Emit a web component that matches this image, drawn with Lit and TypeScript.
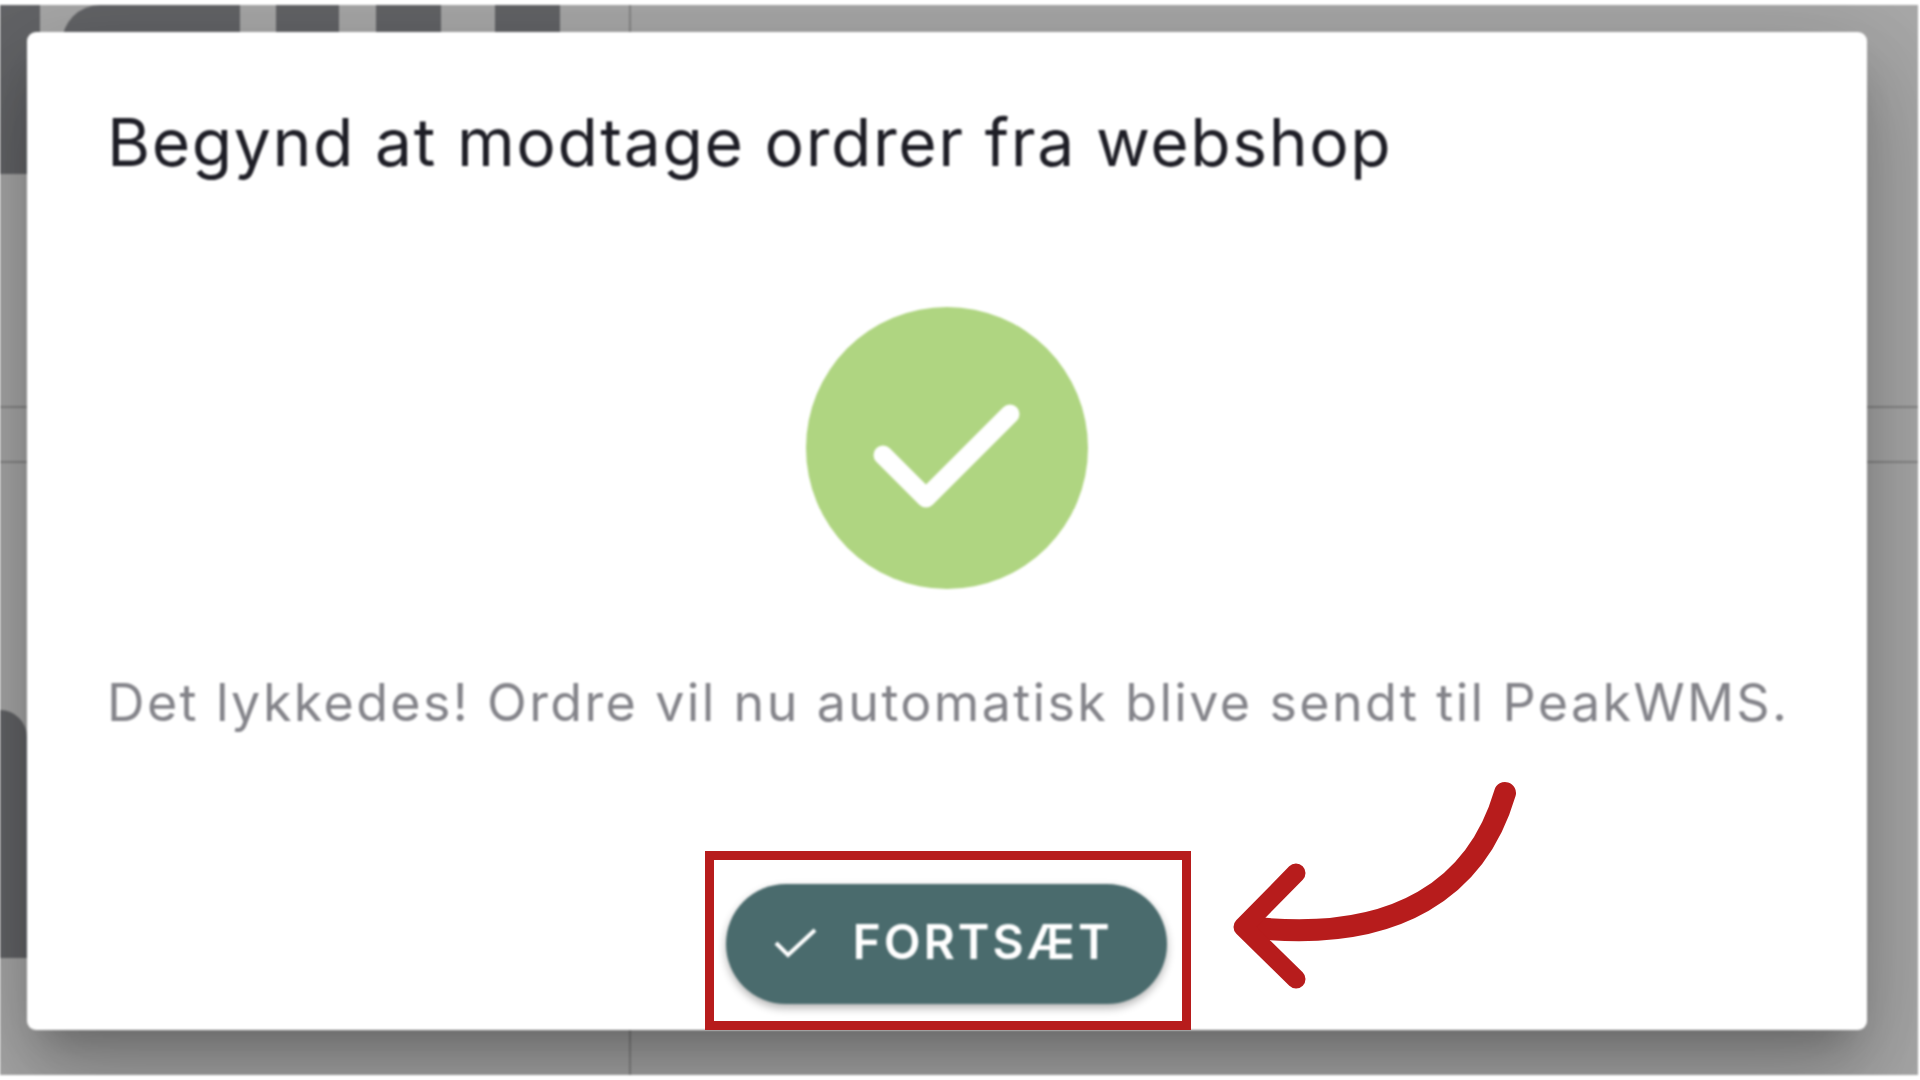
import { LitElement, html, css, svg } from "lit";
import { customElement } from "lit/decorators.js";

@customElement("app-root")
export class AppRoot extends LitElement {
  static styles = css`
    :host { display: block; width: 1920px; height: 1080px; background: #fff; overflow: hidden; font-family: "Inter", "Roboto", sans-serif; }
    .stage { position: relative; width: 1920px; height: 1080px; padding-top: 5px; box-sizing: border-box; }
    .screen { position: relative; width: 1918px; height: 1070px; background: #a8a8a8; overflow: hidden; filter: blur(1.1px); box-sizing: border-box; padding: 27px 51px 45px 27px; display: flex; }
    .blk { position: absolute; background: #636467; }
    .b1 { left: 62px; top: 0; width: 178px; height: 40px; border-top-left-radius: 38px; }
    .b2 { left: 276px; top: 0; width: 63px; height: 40px; }
    .b3 { left: 376px; top: 0; width: 65px; height: 40px; }
    .b4 { left: 495px; top: 0; width: 65px; height: 40px; }
    .b5 { left: 0; top: 0; width: 40px; height: 169px; }
    .b6 { left: 0; top: 705px; width: 27px; height: 248px; border-top-right-radius: 27px; }
    .hl { position: absolute; left: 0; right: 0; height: 2px; background: #858585; }
    .h1 { top: 401px; }
    .h2 { top: 456px; }
    .vl { position: absolute; left: 629px; top: 0; bottom: 0; width: 2px; background: #858585; }
    .dialog {
      position: relative; flex: 1; min-width: 0; background: #fff; border-radius: 9px; box-sizing: border-box;
      padding: 78px 81px 26px 80px; display: flex; flex-direction: column;
      box-shadow: 0 26px 36px -17px rgba(0,0,0,.22), 0 58px 90px 7px rgba(0,0,0,.15), 0 22px 110px 19px rgba(0,0,0,.12);
    }
    .title { margin: 0; font-size: 66px; line-height: 64px; font-weight: 400; letter-spacing: 1.55px; color: #1e1e26; white-space: nowrap; }
    .circle { align-self: center; width: 282px; height: 282px; margin-top: 133px; border-radius: 50%; background: #afd581; display: block; }
    .msg { margin: 78px 0 0; font-size: 52px; line-height: 72px; font-weight: 400; letter-spacing: 2.35px; color: #84848a; white-space: nowrap; }
    .btn {
      align-self: center; margin-top: auto; width: 441px; height: 120px; border: 0; border-radius: 60px; background: #4a6b6d; color: #fff;
      display: flex; align-items: center; justify-content: center; gap: 35px; font: 600 48px/1 "Inter", sans-serif; letter-spacing: 3px;
      box-shadow: 0 4px 8px rgba(0,0,0,.3); padding: 0 6px 4px 0; box-sizing: border-box;
    }
    .btn span { display: block; }
    .btn svg { width: 43px; height: 31px; display: block; }
    .frame { position: absolute; left: 705px; top: 851px; width: 486px; height: 179px; border: 9px solid #b71c1c; box-sizing: border-box; }
    .arrow { position: absolute; left: 0; top: 0; width: 1920px; height: 1080px; pointer-events: none; }
  `;

  render() {
    return html`
      <div class="stage">
        <div class="screen">
          <div class="hl h1"></div><div class="hl h2"></div><div class="vl"></div>
          <div class="blk b1"></div><div class="blk b2"></div><div class="blk b3"></div><div class="blk b4"></div>
          <div class="blk b5"></div><div class="blk b6"></div>
          <div class="dialog">
            <h2 class="title">Begynd at modtage ordrer fra webshop</h2>
            <svg class="circle" viewBox="0 0 282 282">
              <path d="M77 148 L120 191 L204 107" fill="none" stroke="#fff" stroke-width="19" stroke-linecap="round" stroke-linejoin="round"/>
            </svg>
            <p class="msg">Det lykkedes! Ordre vil nu automatisk blive sendt til PeakWMS.</p>
            <button class="btn">
              <svg viewBox="0 0 43 31"><path d="M2 16 L14 28 L41 3" fill="none" stroke="#fff" stroke-width="4"/></svg>
              <span>FORTSÆT</span>
            </button>
          </div>
        </div>
        <div class="frame"></div>
        <svg class="arrow" viewBox="0 0 1920 1080">
          ${svg`<path d="M1505 793 C1478 885 1400 945 1247 927" fill="none" stroke="#b71c1c" stroke-width="22" stroke-linecap="round"/>
          <path d="M1296 873 L1243 927 L1296 979" fill="none" stroke="#b71c1c" stroke-width="19" stroke-linecap="round" stroke-linejoin="round"/>`}
        </svg>
      </div>
    `;
  }
}
